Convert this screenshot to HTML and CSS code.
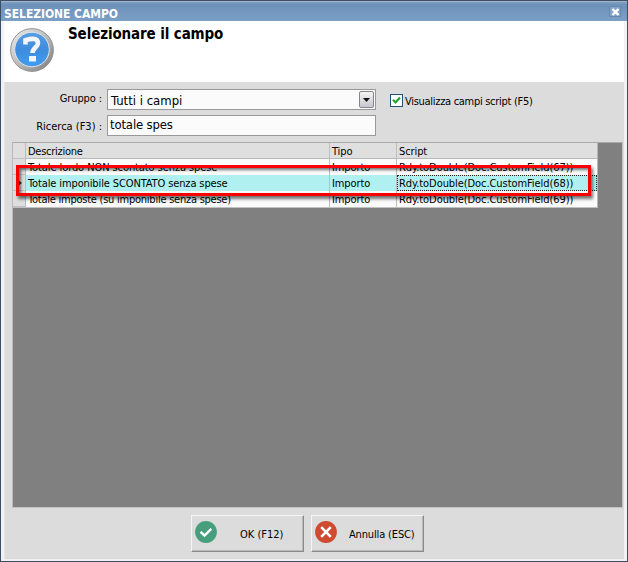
FILE: index.html
```html
<!DOCTYPE html>
<html lang="it">
<head>
<meta charset="utf-8">
<title>Selezione campo</title>
<link rel="stylesheet" href="styles.css">
</head>
<body>
<main class="window">
  <header class="titlebar"><span class="caption">SELEZIONE CAMPO</span>
    <button class="close" aria-label="Chiudi"><svg width="9" height="8" viewBox="0 0 9 8"><path d="M1.5 1L7.5 7M7.5 1L1.5 7" stroke="#fff" stroke-width="2.4"/></svg></button>
  </header>
  <div class="client">
    <section class="banner">
      <svg class="help" width="46" height="46" viewBox="0 0 46 46">
        <defs>
          <linearGradient id="rim" x1="0" y1="0" x2="1" y2="1"><stop offset="0" stop-color="#eeeeee"/><stop offset=".5" stop-color="#bcbcbc"/><stop offset="1" stop-color="#777"/></linearGradient>
          <linearGradient id="blue" x1="0" y1="0" x2="0" y2="1"><stop offset="0" stop-color="#5a9ee2"/><stop offset=".5" stop-color="#3d8cdd"/><stop offset="1" stop-color="#439cf0"/></linearGradient>
        </defs>
        <circle cx="23" cy="23" r="21.4" fill="url(#rim)" stroke="#8c8c8c" stroke-width=".9"/>
        <circle cx="23" cy="22.5" r="17.3" fill="url(#blue)" stroke="#e2e6eb" stroke-width="1"/>
        <path d="M16.5 17.5V13.2Q28.5 9.5 29 16C29 20.5 23.5 20.5 23.5 26" fill="none" stroke="#f4f4fb" stroke-width="4.6"/>
        <rect x="20" y="29" width="7" height="5.5" fill="#f4f4fb"/>
      </svg>
      <h1 class="heading">Selezionare il campo</h1>
    </section>
    <form class="filters">
      <label class="label group-label">Gruppo :</label>
      <div class="field select"><span class="value v1">Tutti i campi</span><span class="arrow"><svg width="7" height="4" viewBox="0 0 7 4"><path d="M0 0H7L3.5 4Z" fill="#111"/></svg></span></div>
      <label class="check"><span class="box"><svg width="9" height="9" viewBox="0 0 9 9"><path d="M1 3.8L3.5 6.5L8 1.5" fill="none" stroke="#1fa32b" stroke-width="2.1"/></svg></span><span class="check-text">Visualizza campi script (F5)</span></label>
      <label class="label search-label">Ricerca (F3) :</label>
      <div class="field"><span class="value v2">totale spes</span></div>
    </form>
    <section class="grid-area">
      <div class="grid">
        <div class="row head"><i></i><b><span class="h1">Descrizione</span></b><b><span class="h2">Tipo</span></b><b><span class="h3">Script</span></b></div>
        <div class="row"><i></i><b><span class="a1">Totale lordo NON scontato senza spese</span></b><b><span class="imp">Importo</span></b><b><span class="scr">Rdy.toDouble(Doc.CustomField(67))</span></b></div>
        <div class="row selected"><i><svg width="4" height="6" viewBox="0 0 4 6"><path d="M0 0L4 3L0 6Z" fill="#333"/></svg></i><b><span class="a2">Totale imponibile SCONTATO senza spese</span></b><b><span class="imp">Importo</span></b><b class="focus"><span class="scr">Rdy.toDouble(Doc.CustomField(68))</span></b></div>
        <div class="row"><i></i><b><span class="a3">Totale imposte (su imponibile senza spese)</span></b><b><span class="imp">Importo</span></b><b><span class="scr">Rdy.toDouble(Doc.CustomField(69))</span></b></div>
      </div>
      <div class="highlight"></div>
    </section>
    <footer class="actions">
      <button class="action"><svg width="22" height="22" viewBox="0 0 22 22"><circle cx="11" cy="11" r="10.9" fill="#479e7c"/><path d="M5.5 10.8L9.5 14.5L16.3 7.8" fill="none" stroke="#fff" stroke-width="2.4"/></svg><span class="ok">OK (F12)</span></button>
      <button class="action"><svg width="22" height="22" viewBox="0 0 22 22"><circle cx="11" cy="11" r="10.9" fill="#ce4a31"/><path d="M6.2 6.2L15.8 15.8M15.8 6.2L6.2 15.8" stroke="#fff" stroke-width="2.6"/></svg><span class="cancel">Annulla (ESC)</span></button>
    </footer>
  </div>
</main>
</body>
</html>
```
FILE: styles.css
```css
* { box-sizing: border-box; }
body { margin: 0; font: 11px/16px "DejaVu Sans Condensed", "DejaVu Sans", sans-serif; font-stretch: condensed; color: #000; }
.window { width: 628px; height: 562px; background: #dcdcdc; border: 1px solid #3a4e68; border-top-color: #3e4e65; display: flex; flex-direction: column; overflow: hidden; }
.titlebar { height: 20px; flex: none; background: linear-gradient(#7f9fc3, #6d91ba 15%, #7c9fc5); border-top: 1px solid #a2b4ca; display: flex; justify-content: space-between; padding: 0 6px 0 3px; }
.caption { color: #fff; font: bold 12px/24px "DejaVu Sans Condensed", sans-serif; white-space: nowrap; letter-spacing: -.05px; }
.close { width: 12px; height: 11px; margin: 4px 0 0; padding: 0; border: 1px solid #6788ae; background: #87a5c8; display: grid; place-items: center; }
.client { flex: 1; border: solid #f1f1f1; border-width: 0 3px 2px; box-shadow: inset 1px 0 #e5e5e5; display: flex; flex-direction: column; }
.banner { height: 61px; flex: none; background: #fff; display: flex; }
.help { margin: 6px 0 0 5px; }
.heading { margin: 3px 0 0 13px; font: bold 15px/20px "DejaVu Sans Condensed", sans-serif; letter-spacing: -.12px; white-space: nowrap; }
.filters { height: 60px; flex: none; display: grid; grid-template: 21px 21px / 103px 269px 1fr; row-gap: 5px; padding-top: 7px; }
.label { text-align: right; padding-right: 5px; white-space: nowrap; }
.group-label { padding-top: 2px; letter-spacing: -.1px; }
.search-label { padding-top: 4px; }
.field { border: 1px solid #999; background: #fbfbfb; display: flex; justify-content: space-between; font: 13px/18px "DejaVu Sans Condensed", sans-serif; white-space: nowrap; }
.select .value { padding-left: 3px; line-height: 21px; }
.value { padding-left: 2px; }
.v2 { letter-spacing: -.15px; }
.arrow { width: 15px; height: 17px; margin: 1px; border: 1px solid #85858d; border-radius: 2px; background: linear-gradient(#f5f5f7, #c6c6cd); display: grid; place-items: center; }
.check { display: flex; padding: 5px 0 0 14px; white-space: nowrap; }
.box { width: 13px; height: 13px; border: 1px solid #1c5180; background: #fff; display: grid; place-items: center; margin-right: 2px; }
.check-text { line-height: 15px; letter-spacing: -.29px; }
.grid-area { position: relative; width: 611px; height: 366px; flex: none; margin-left: 8px; background: #808080; border: 1px solid #b9b9b9; border-color: #aaa #c3c3c3 #c3c3c3 #b9b9b9; }
.grid { width: 585px; border-right: 1px solid #b8b8b8; border-bottom: 1px solid #c0c0c0; }
.row { height: 16px; display: grid; grid-template-columns: 13px 304px 67px 1fr; background: #fbfbfb; }
.row i { background: #dedede; border-right: 1px solid #bbb; border-bottom: 1px solid #c0c0c0; display: flex; align-items: center; padding-left: 5px; }
.row b { font-weight: normal; border-right: 1px solid #bdbdbd; padding-left: 2px; line-height: 18px; white-space: nowrap; overflow: hidden; }
.row b:last-child { border-right: 0; }
.head, .head i { background: #dfdfdf; }
.head b { border-bottom: 1px solid #b8b8b8; }
.selected { background: #b0f0f0; }
.row .focus { border: 1px dotted #222; padding-left: 1px; line-height: 16px; }
.row .focus:last-child { border-right: 1px dotted #222; }
.h1 { letter-spacing: -.27px; }
.h2, .h3 { letter-spacing: -.1px; }
.a1 { letter-spacing: -.09px; }
.a2 { letter-spacing: -.12px; }
.a3 { letter-spacing: -.24px; }
.imp { letter-spacing: -.1px; }
.scr { letter-spacing: -.07px; }
.highlight { position: absolute; left: 3px; top: 22px; width: 575px; height: 31px; border: 3px solid #f90000; box-shadow: 2px 3px 3px #0008, inset 2px 2px 3px #0008; }
.actions { display: flex; gap: 7px; padding: 7px 0 0 187px; }
.action { width: 113px; height: 37px; padding: 0 0 2px 3px; border: 1px solid; border-color: #f5f5f5 #8b8b8b #8b8b8b #f5f5f5; box-shadow: inset -1px -1px #b8b8b8; background: #dcdcdc; display: flex; align-items: center; font: inherit; color: #000; white-space: nowrap; }
.action svg { margin-top: -2px; }
.action span { padding-top: 4px; }
.ok { margin-left: 23px; }
.cancel { margin-left: 12px; letter-spacing: -.15px; }
```
